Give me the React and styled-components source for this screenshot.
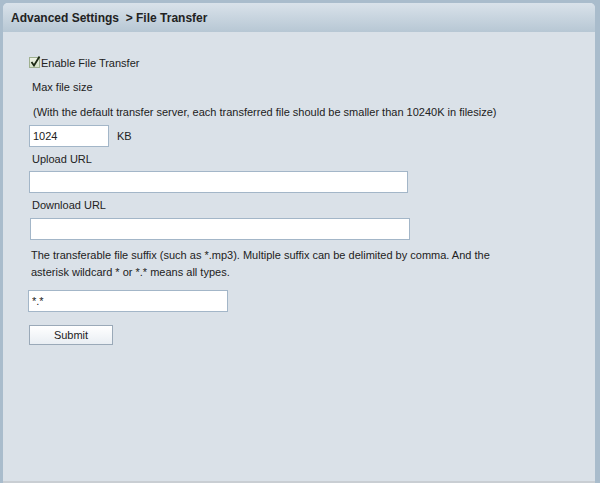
import React from "react";
import styled, { createGlobalStyle } from "styled-components";

const Global = createGlobalStyle`
  html, body { margin: 0; padding: 0; }
  body {
    background: #a9bccc;
    font-family: "Liberation Sans", Arial, sans-serif;
    width: 600px;
    height: 483px;
    overflow: hidden;
  }
`;

const Frame = styled.div`
  box-sizing: border-box;
  width: 600px;
  height: 483px;
  padding: 3px 5px 0 3px;
  display: flex;
`;

const Panel = styled.div`
  flex: 1;
  display: flex;
  flex-direction: column;
  background: #dae1e8;
  border-radius: 5px 5px 0 0;
  overflow: hidden;
  position: relative;
`;

const Header = styled.div`
  height: 29px;
  background: linear-gradient(#d9e2ea, #b7c7d4);
  display: flex;
  align-items: center;
  padding-left: 8px;
  font-family: "Liberation Sans", Arial, sans-serif;
  font-weight: bold;
  font-size: 12px;
  color: #222;
  white-space: pre;
`;

const Body = styled.div`
  flex: 1;
  display: flex;
  flex-direction: column;
  align-items: flex-start;
  padding: 23px 0 0 25px;
  font-family: "Liberation Sans", Arial, sans-serif;
  font-size: 11px;
  color: #222;
`;

const CheckRow = styled.label`
  display: flex;
  align-items: center;
  height: 15px;
  margin-left: 1px;
  gap: 1px;
`;

const Box = styled.span`
  width: 11px;
  height: 11px;
  box-sizing: border-box;
  border: 1px solid #9fb08f;
  background: linear-gradient(#eef3e6, #d6e2c8);
  position: relative;
  display: inline-block;
`;

const Label = styled.div`
  height: 15px;
  line-height: 15px;
  margin: ${(p) => p.m || "0"};
  white-space: nowrap;
`;

const Para = styled.div`
  width: 470px;
  line-height: 17px;
  margin: ${(p) => p.m || "0"};
`;

const Input = styled.input`
  box-sizing: border-box;
  width: ${(p) => p.w}px;
  height: 22px;
  border: 1px solid #a3b6c8;
  background: #fff;
  font-family: "Liberation Sans", Arial, sans-serif;
  font-size: 11px;
  color: #222;
  padding: 0 3px;
  margin: ${(p) => p.m || "0"};
  outline: none;
`;

const Row = styled.div`
  display: flex;
  align-items: center;
  gap: 8px;
  margin: ${(p) => p.m || "0"};
`;

const Button = styled.button`
  box-sizing: border-box;
  width: 84px;
  height: 20px;
  border: 1px solid #9aa9b8;
  background: linear-gradient(#ffffff, #e9eef3);
  font-family: "Liberation Sans", Arial, sans-serif;
  font-size: 11px;
  color: #222;
  padding: 0;
  margin: ${(p) => p.m || "0"};
`;

const BottomBar = styled.div`
  position: absolute;
  left: 0;
  right: 0;
  bottom: 0;
  height: 2px;
  background: #c9ced3;
`;

export default function App() {
  return (
    <>
      <Global />
      <Frame>
        <Panel>
          <Header>{"Advanced Settings  > File Transfer"}</Header>
          <Body>
            <CheckRow>
              <Box>
                <svg width="11" height="11" viewBox="0 0 11 11" style={{ position: "absolute", left: 0, top: -2 }}>
                  <path d="M1.5 6 L4 9.5 L9.5 0.5" fill="none" stroke="#1e2a14" strokeWidth="1.8" />
                </svg>
              </Box>
              <span>Enable File Transfer</span>
            </CheckRow>
            <Label m="10px 0 0 4px">Max file size</Label>
            <Label m="10px 0 0 5px">
              (With the default transfer server, each transferred file should be smaller than 10240K in filesize)
            </Label>
            <Row m="5px 0 0 1px">
              <Input w={80} defaultValue="1024" />
              <span>KB</span>
            </Row>
            <Label m="5px 0 0 4px">Upload URL</Label>
            <Input w={379} m="4px 0 0 1px" />
            <Label m="5px 0 0 4px">Download URL</Label>
            <Input w={380} m="5px 0 0 2px" />
            <Para m="7px 0 0 3px">
              The transferable file suffix (such as *.mp3). Multiple suffix can be delimited by comma. And the
              asterisk wildcard * or *.* means all types.
            </Para>
            <Input w={200} m="9px 0 0 0" defaultValue="*.*" />
            <Button m="13px 0 0 1px">Submit</Button>
          </Body>
          <BottomBar />
        </Panel>
      </Frame>
    </>
  );
}
